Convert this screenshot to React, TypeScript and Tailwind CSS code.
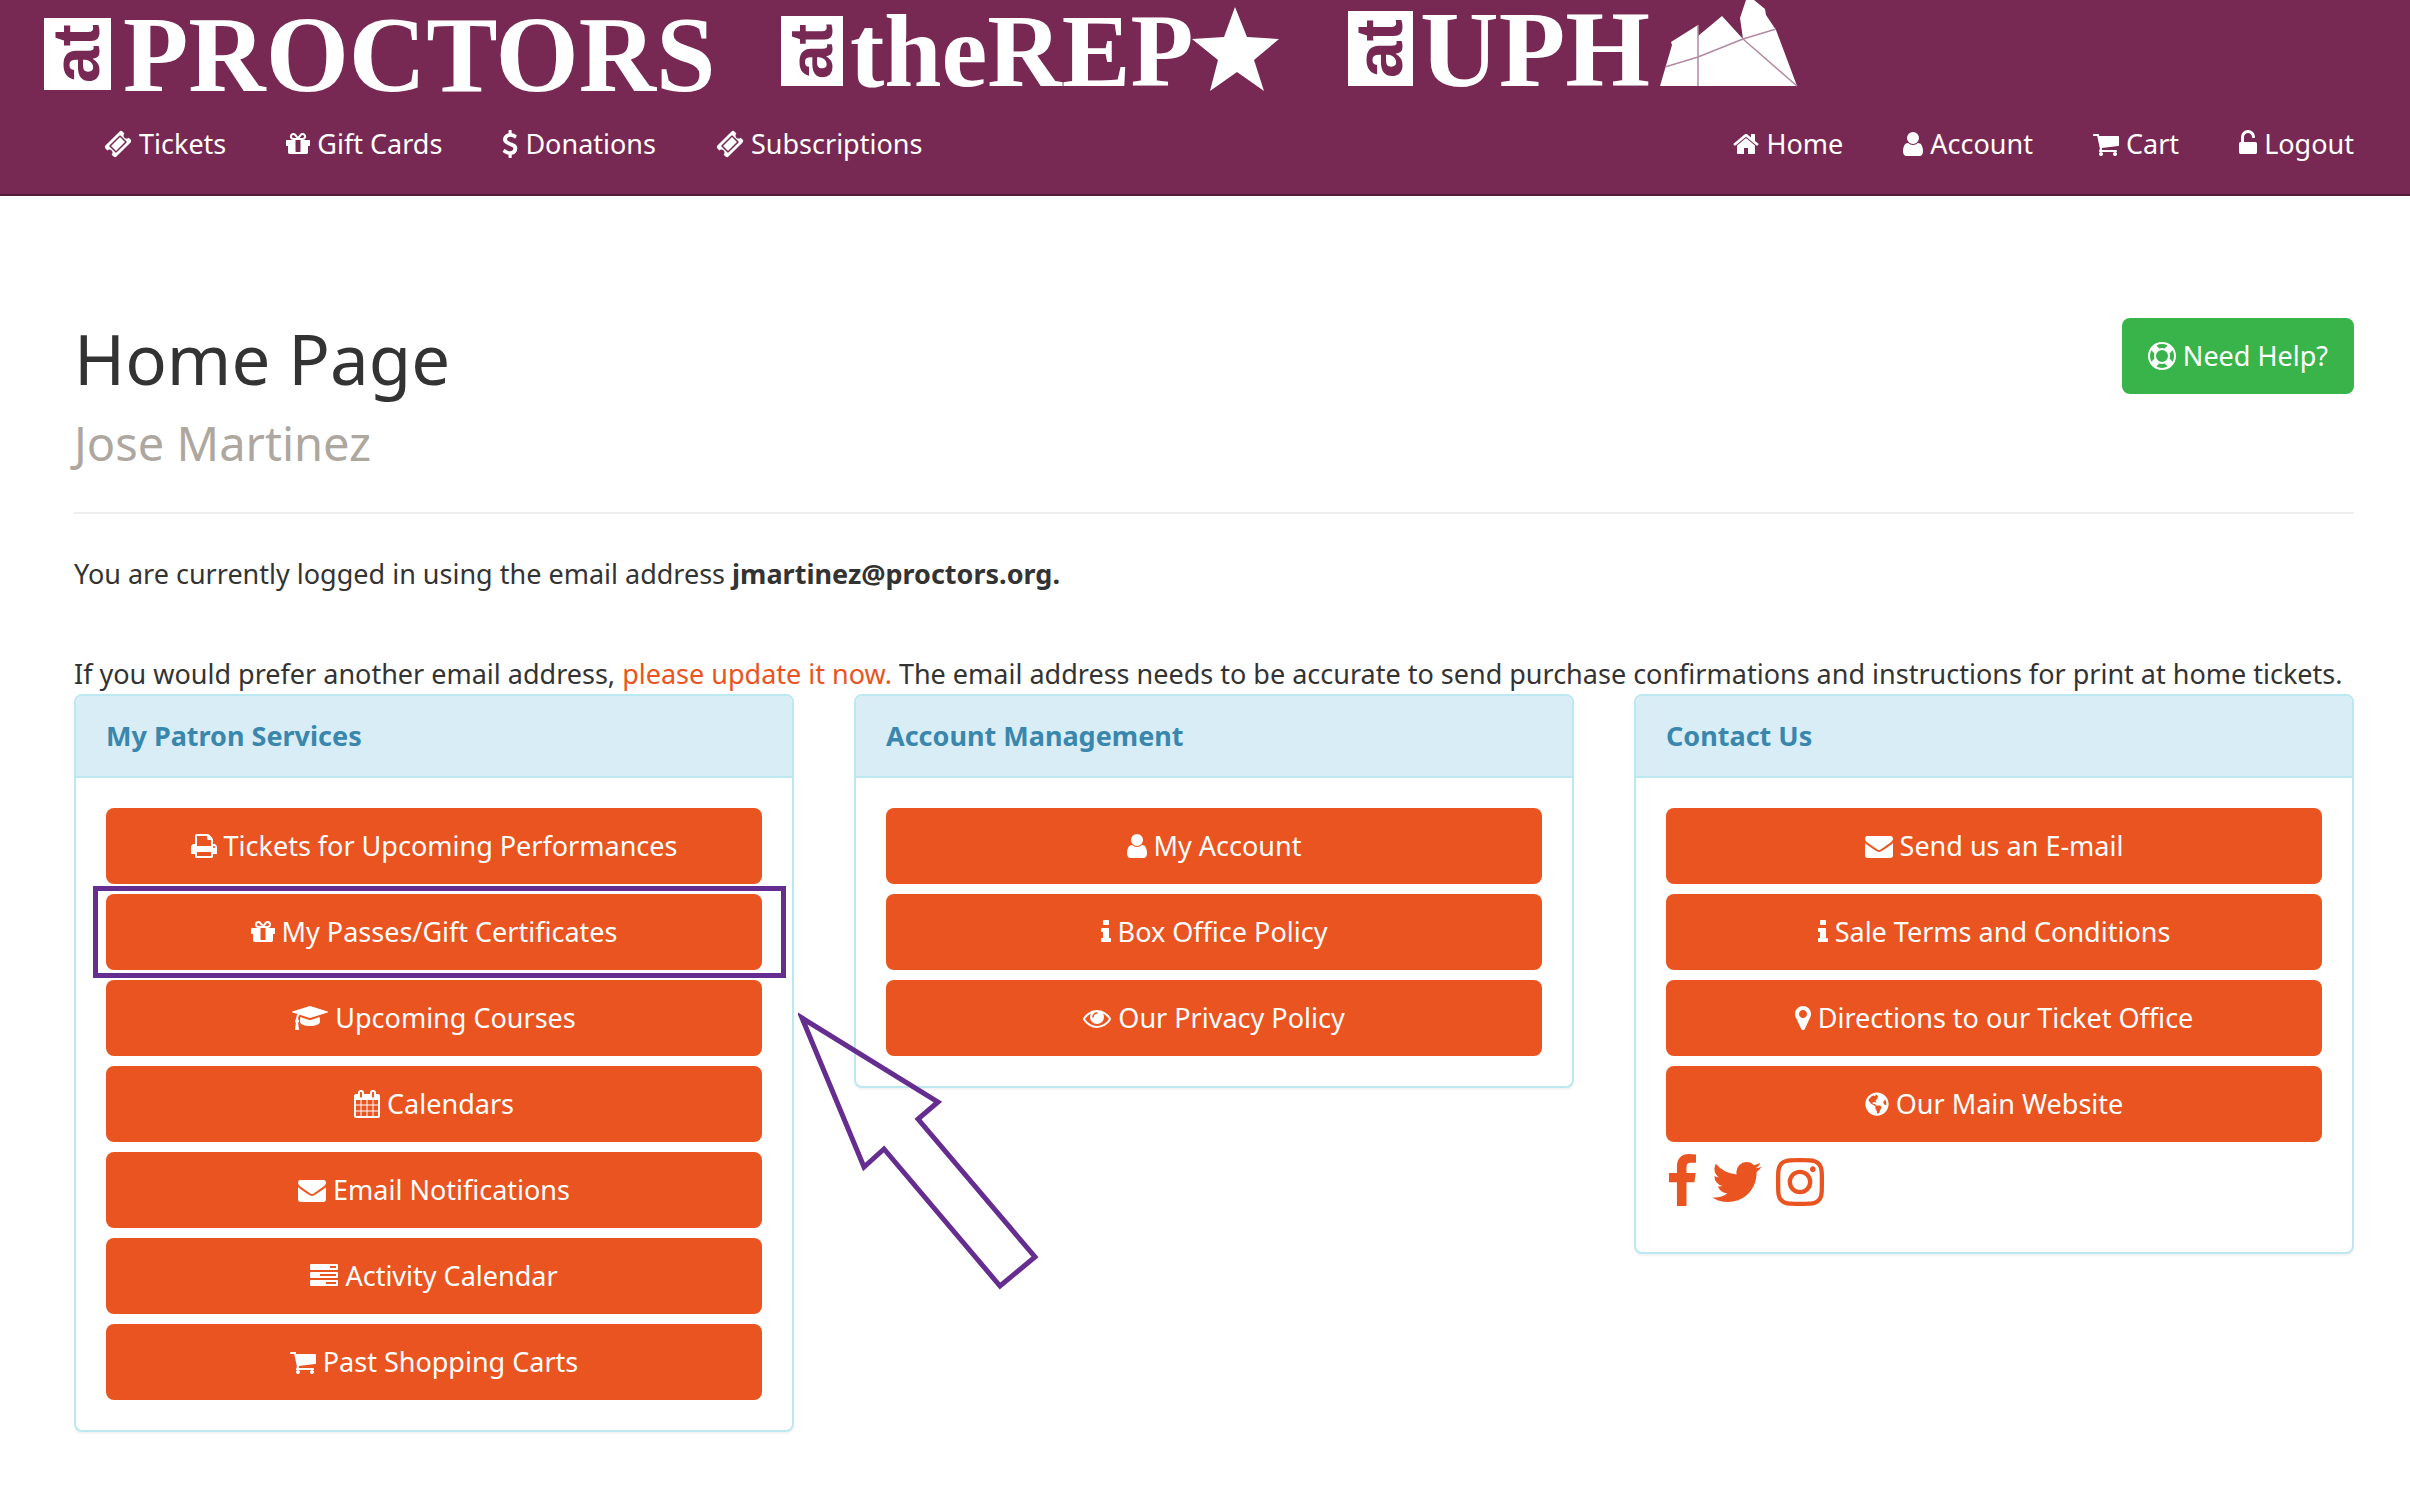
import type { ReactNode } from "react";
import { FaGlobeAmericas } from "react-icons/fa";

// Icon outlines share a 1792 unit square; width is the advance of the glyph
const icons = {
    home: { width: 1664, d: "M1472 992v480q0 26-19 45t-45 19h-384v-384h-256v384h-384q-26 0-45-19t-19-45v-480q0-1 .5-3t.5-3l575-474 575 474q1 2 1 6zm223-69l-62 74q-8 9-21 11h-3q-13 0-21-7l-692-577-692 577q-12 8-24 7-13-2-21-11l-62-74q-8-10-7-23.5t11-21.5l719-599q32-26 76-26t76 26l244 204v-195q0-14 9-23t23-9h192q14 0 23 9t9 23v408l219 182q10 8 11 21.5t-7 23.5z" },
    user: { width: 1280, d: "M1536 1399q0 109-62.5 187t-150.5 78h-854q-88 0-150.5-78t-62.5-187q0-85 8.5-160.5t31.5-152 58.5-131 94-89 134.5-34.5q131 128 313 128t313-128q76 0 134.5 34.5t94 89 58.5 131 31.5 152 8.5 160.5zm-256-887q0 159-112.5 271.5t-271.5 112.5-271.5-112.5-112.5-271.5 112.5-271.5 271.5-112.5 271.5 112.5 112.5 271.5z" },
    cart: { width: 1664, d: "M704 1536q0 52-38 90t-90 38-90-38-38-90 38-90 90-38 90 38 38 90zm896 0q0 52-38 90t-90 38-90-38-38-90 38-90 90-38 90 38 38 90zm128-1088v512q0 24-16.5 42.5t-40.5 21.5l-1044 122q13 60 13 70 0 16-24 64h920q26 0 45 19t19 45-19 45-45 19h-1024q-26 0-45-19t-19-45q0-11 8-31.5t16-36 21.5-40 15.5-29.5l-177-823h-204q-26 0-45-19t-19-45 19-45 45-19h256q16 0 28.5 6.5t19.5 15.5 13 24.5 8 26 5.5 29.5 4.5 26h1201q26 0 45 19t19 45z" },
    unlock: { width: 1152, d: "M1376 768q40 0 68 28t28 68v576q0 40-28 68t-68 28h-960q-40 0-68-28t-28-68v-576q0-40 28-68t68-28h32v-320q0-185 131.5-316.5t316.5-131.5 316.5 131.5 131.5 316.5q0 26-19 45t-45 19h-64q-26 0-45-19t-19-45q0-106-75-181t-181-75-181 75-75 181v320h736z" },
    gift: { width: 1536, d: "M1056 1356v-716h-320v716q0 25 18 38.5t46 13.5h192q28 0 46-13.5t18-38.5zm-456-844h195l-126-161q-26-31-69-31-40 0-68 28t-28 68 28 68 68 28zm688-96q0-40-28-68t-68-28q-43 0-69 31l-125 161h194q40 0 68-28t28-68zm376 256v320q0 14-9 23t-23 9h-96v416q0 40-28 68t-68 28h-1088q-40 0-68-28t-28-68v-416h-96q-14 0-23-9t-9-23v-320q0-14 9-23t23-9h440q-93 0-158.5-65.5t-65.5-158.5 65.5-158.5 158.5-65.5q107 0 168 77l128 165 128-165q61-77 168-77 93 0 158.5 65.5t65.5 158.5-65.5 158.5-158.5 65.5h440q14 0 23 9t9 23z" },
    ticket: { width: 1792, d: "M1024 452l316 316-572 572-316-316zm-211 979l618-618q19-19 19-45t-19-45l-362-362q-18-18-45-18t-45 18l-618 618q-19 19-19 45t19 45l362 362q18 18 45 18t45-18zm889-637l-907 908q-37 37-90.5 37t-90.5-37l-126-126q56-56 56-136t-56-136-136-56-136 56l-125-126q-37-37-37-90.5t37-90.5l907-906q37-37 90.5-37t90.5 37l125 125q-56 56-56 136t56 136 136 56 136-56l126 125q37 37 37 90.5t-37 90.5z" },
    dollar: { width: 1024, d: "M1362 1185q0 153-99.5 263.5t-258.5 136.5v175q0 14-9 23t-23 9h-135q-13 0-22.5-9.5t-9.5-22.5v-175q-66-9-127.5-31t-101.5-44.5-74-48-46.5-37.5-17.5-18q-17-21-2-41l103-135q7-10 23-12 15-2 24 9l2 2q113 99 243 125 37 8 74 8 81 0 142.5-43t61.5-122q0-28-15-53t-33.5-42-58.5-37.5-66-32-80-32.5q-39-16-61.5-25t-61.5-26.5-62.5-31-56.5-35.5-53.5-42.5-43.5-49-35.5-58-21-66.5-8.5-78q0-138 98-242t255-134v-180q0-13 9.5-22.5t22.5-9.5h135q14 0 23 9t9 23v176q57 6 110.5 23t87 33.5 63.5 37.5 39 29 15 14q17 18 5 38l-81 146q-8 15-23 16-14 3-27-7-3-3-14.5-12t-39-26.5-58.5-32-74.5-26-85.5-11.5q-95 0-155 43t-60 111q0 26 8.5 48t29.5 41.5 39.5 33 56 31 60.5 27 70 27.5q53 20 81 31.5t76 35 75.5 42.5 62 50 53 63.5 31.5 76.5 13 94z" },
    print: { width: 1664, d: "M448 1536h896v-256h-896v256zm0-640h896v-384h-160q-40 0-68-28t-28-68v-160h-640v640zm1152 64q0-26-19-45t-45-19-45 19-19 45 19 45 45 19 45-19 19-45zm128 0v416q0 13-9.5 22.5t-22.5 9.5h-224v160q0 40-28 68t-68 28h-960q-40 0-68-28t-28-68v-160h-224q-13 0-22.5-9.5t-9.5-22.5v-416q0-79 56.5-135.5t135.5-56.5h64v-544q0-40 28-68t68-28h672q40 0 88 20t76 48l152 152q28 28 48 76t20 88v256h64q79 0 135.5 56.5t56.5 135.5z" },
    graduation: { width: 2304, d: "M1774 836l18 316q4 69-82 128t-235 93.5-323 34.5-323-34.5-235-93.5-82-128l18-316 574 181q22 7 48 7t48-7zm530-324q0 23-22 31l-1120 352q-4 1-10 1t-10-1l-652-206q-43 34-71 111.5t-34 178.5q63 36 63 109 0 69-58 107l58 433q2 14-8 25-9 11-24 11h-192q-15 0-24-11-10-11-8-25l58-433q-58-38-58-107 0-73 65-111 11-207 98-330l-333-104q-22-8-22-31t22-31l1120-352q4-1 10-1t10 1l1120 352q22 8 22 31z" },
    calendar: { width: 1664, d: "M192 1664h288v-288h-288v288zm352 0h320v-288h-320v288zm-352-352h288v-320h-288v320zm352 0h320v-320h-320v320zm-352-384h288v-288h-288v288zm736 736h320v-288h-320v288zm-384-736h320v-288h-320v288zm768 736h288v-288h-288v288zm-384-352h320v-320h-320v320zm-352-864v-288q0-13-9.5-22.5t-22.5-9.5h-64q-13 0-22.5 9.5t-9.5 22.5v288q0 13 9.5 22.5t22.5 9.5h64q13 0 22.5-9.5t9.5-22.5zm736 864h288v-320h-288v320zm-384-384h320v-288h-320v288zm384 0h288v-288h-288v288zm32-480v-288q0-13-9.5-22.5t-22.5-9.5h-64q-13 0-22.5 9.5t-9.5 22.5v288q0 13 9.5 22.5t22.5 9.5h64q13 0 22.5-9.5t9.5-22.5zm384-64v1280q0 52-38 90t-90 38h-1408q-52 0-90-38t-38-90v-1280q0-52 38-90t90-38h128v-96q0-66 47-113t113-47h64q66 0 113 47t47 113v96h384v-96q0-66 47-113t113-47h64q66 0 113 47t47 113v96h128q52 0 90 38t38 90z" },
    envelope: { width: 1792, d: "M1792 710v794q0 66-47 113t-113 47h-1472q-66 0-113-47t-47-113v-794q44 49 101 87 362 246 497 345 57 42 92.5 65.5t94.5 48 110 24.5h2q51 0 110-24.5t94.5-48 92.5-65.5q170-123 498-345 57-39 100-87zm0-294q0 79-49 151t-122 123q-376 261-468 325-10 7-42.5 31t-54 38.5-52 32.5-57.5 27-50 9h-2q-23 0-50-9t-57.5-27-52-32.5-54-38.5-42.5-31q-91-64-262-182.5t-205-142.5q-62-42-117-115.5t-55-136.5q0-78 41.5-130t118.5-52h1472q65 0 112.5 47t47.5 113z" },
    tasks: { width: 1792, d: "M1024 1408h640v-128h-640v128zm-384-512h1024v-128h-1024v128zm640-512h384v-128h-384v128zm512 832v256q0 26-19 45t-45 19h-1664q-26 0-45-19t-19-45v-256q0-26 19-45t45-19h1664q26 0 45 19t19 45zm0-512v256q0 26-19 45t-45 19h-1664q-26 0-45-19t-19-45v-256q0-26 19-45t45-19h1664q26 0 45 19t19 45zm0-512v256q0 26-19 45t-45 19h-1664q-26 0-45-19t-19-45v-256q0-26 19-45t45-19h1664q26 0 45 19t19 45z" },
    info: { width: 640, d: "M1216 1344v128q0 26-19 45t-45 19h-512q-26 0-45-19t-19-45v-128q0-26 19-45t45-19h64v-384h-64q-26 0-45-19t-19-45v-128q0-26 19-45t45-19h384q26 0 45 19t19 45v576h64q26 0 45 19t19 45zm-128-1152v192q0 26-19 45t-45 19h-256q-26 0-45-19t-19-45v-192q0-26 19-45t45-19h256q26 0 45 19t19 45z" },
    eye: { width: 1792, d: "M1664 960q-152-236-381-353 61 104 61 225 0 185-131.5 316.5t-316.5 131.5-316.5-131.5-131.5-316.5q0-121 61-225-229 117-381 353 133 205 333.5 326.5t434.5 121.5 434.5-121.5 333.5-326.5zm-720-384q0-20-14-34t-34-14q-125 0-214.5 89.5t-89.5 214.5q0 20 14 34t34 14 34-14 14-34q0-86 61-147t147-61q20 0 34-14t14-34zm848 384q0 34-20 69-140 230-376.5 368.5t-499.5 138.5-499.5-139-376.5-368q-20-35-20-69t20-69q140-229 376.5-368t499.5-139 499.5 139 376.5 368q20 35 20 69z" },
    marker: { width: 1024, d: "M1152 640q0-106-75-181t-181-75-181 75-75 181 75 181 181 75 181-75 75-181zm256 0q0 109-33 179l-364 774q-16 33-47.5 52t-67.5 19-67.5-19-46.5-52l-365-774q-33-70-33-179 0-212 150-362t362-150 362 150 150 362z" },
    lifeRing: { width: 1792, d: "M896 0q182 0 348 71t286 191 191 286 71 348-71 348-191 286-286 191-348 71-348-71-286-191-191-286-71-348 71-348 191-286 286-191 348-71zm0 128q-190 0-361 90l194 194q82-28 167-28t167 28l194-194q-171-90-361-90zm-678 1129l194-194q-28-82-28-167t28-167l-194-194q-90 171-90 361t90 361zm678 407q190 0 361-90l-194-194q-82 28-167 28t-167-28l-194 194q171 90 361 90zm0-384q159 0 271.5-112.5t112.5-271.5-112.5-271.5-271.5-112.5-271.5 112.5-112.5 271.5 112.5 271.5 271.5 112.5zm484-217l194 194q90-171 90-361t-90-361l-194 194q28 82 28 167t-28 167z" },
    facebook: { width: 1024, d: "M1343 12v264h-157q-86 0-116 36t-30 108v189h293l-39 296h-254v759h-306v-759h-255v-296h255v-218q0-186 104-288.5t277-102.5q147 0 228 12z" },
    twitter: { width: 1664, d: "M1684 408q-67 98-162 167 1 14 1 42 0 130-38 259.5t-115.5 248.5-184.5 210.5-258 146-323 54.5q-271 0-496-145 35 4 78 4 225 0 401-138-105-2-188-64.5t-114-159.5q33 5 61 5 43 0 85-11-112-23-185.5-111.5t-73.5-205.5v-4q68 38 146 41-66-44-105-115t-39-154q0-88 44-163 121 149 294.5 238.5t371.5 99.5q-8-38-8-74 0-134 94.5-228.5t228.5-94.5q140 0 236 102 109-21 205-78-37 115-142 178 93-10 186-50z" },
    instagram: { width: 1536, d: "M1152 896q0-106-75-181t-181-75-181 75-75 181 75 181 181 75 181-75 75-181zm138 0q0 164-115 279t-279 115-279-115-115-279 115-279 279-115 279 115 115 279zm108-410q0 38-27 65t-65 27-65-27-27-65 27-65 65-27 65 27 27 65zm-502-220q-7 0-76.5-.5t-105.5 0-96.5 3-103 10-71.5 18.5q-50 20-88 58t-58 88q-11 29-18.5 71.5t-10 103-3 96.5 0 105.5.5 76.5-.5 76.5 0 105.5 3 96.5 10 103 18.5 71.5q20 50 58 88t88 58q29 11 71.5 18.5t103 10 96.5 3 105.5 0 76.5-.5 76.5.5 105.5 0 96.5-3 103-10 71.5-18.5q50-20 88-58t58-88q11-29 18.5-71.5t10-103 3-96.5 0-105.5-.5-76.5.5-76.5 0-105.5-3-96.5-10-103-18.5-71.5q-20-50-58-88t-88-58q-29-11-71.5-18.5t-103-10-96.5-3-105.5 0-76.5.5zm768 630q0 229-5 317-10 208-124 322t-322 124q-88 5-317 5t-317-5q-208-10-322-124t-124-322q-5-88-5-317t5-317q10-208 124-322t322-124q88-5 317-5t317 5q208 10 322 124t124 322q5 88 5 317z" },
};

type IconName = keyof typeof icons | "globe";

interface IconProps {
    name: IconName;
    className?: string;
}

function Icon({ name, className = "inline-block h-7 w-auto align-[-4px]" }: IconProps) {
    if (name === "globe") {
        return <FaGlobeAmericas aria-hidden="true" className="inline-block size-6 align-[-2px]" />;
    }

    const { width, d } = icons[name];
    // The graduation cap is wider than the square and starts at zero
    const left = width > 1792 ? 0 : (1792 - width) / 2;

    return (
        <svg viewBox={`${left} 0 ${width} 1792`} fill="currentColor" aria-hidden="true" className={className}>
            <path d={d} />
        </svg>
    );
}

interface LinkItem {
    icon: IconName;
    label: string;
    highlighted?: boolean;
}

const mainLinks: LinkItem[] = [
    { icon: "ticket", label: "Tickets" },
    { icon: "gift", label: "Gift Cards" },
    { icon: "dollar", label: "Donations" },
    { icon: "ticket", label: "Subscriptions" },
];

const userLinks: LinkItem[] = [
    { icon: "home", label: "Home" },
    { icon: "user", label: "Account" },
    { icon: "cart", label: "Cart" },
    { icon: "unlock", label: "Logout" },
];

const patronLinks: LinkItem[] = [
    { icon: "print", label: "Tickets for Upcoming Performances" },
    { icon: "gift", label: "My Passes/Gift Certificates", highlighted: true },
    { icon: "graduation", label: "Upcoming Courses" },
    { icon: "calendar", label: "Calendars" },
    { icon: "envelope", label: "Email Notifications" },
    { icon: "tasks", label: "Activity Calendar" },
    { icon: "cart", label: "Past Shopping Carts" },
];

const accountLinks: LinkItem[] = [
    { icon: "user", label: "My Account" },
    { icon: "info", label: "Box Office Policy" },
    { icon: "eye", label: "Our Privacy Policy" },
];

const contactLinks: LinkItem[] = [
    { icon: "envelope", label: "Send us an E-mail" },
    { icon: "info", label: "Sale Terms and Conditions" },
    { icon: "marker", label: "Directions to our Ticket Office" },
    { icon: "globe", label: "Our Main Website" },
];

const socialLinks: LinkItem[] = [
    { icon: "facebook", label: "Facebook" },
    { icon: "twitter", label: "Twitter" },
    { icon: "instagram", label: "Instagram" },
];

function Logos() {
    return (
        <div className="flex gap-16 pl-11 font-['Liberation_Serif',serif] font-bold">
            <a href="#proctors">
                <svg width="673" height="94" viewBox="0 0 673 94" fill="#fff" className="block overflow-visible">
                    <rect y="18" width="67" height="72" />
                    <text transform="translate(55 83) rotate(-90)" fontSize="66" fill="#772953" className="font-['Liberation_Sans',sans-serif]">at</text>
                    <text x="79" y="91" fontSize="107">PROCTORS</text>
                </svg>
            </a>
            <a href="#the-rep">
                <svg width="503" height="94" viewBox="0 0 503 94" fill="#fff" className="block overflow-visible">
                    <rect y="16" width="62" height="70" />
                    <text transform="translate(51 79) rotate(-90)" fontSize="62" fill="#772953" className="font-['Liberation_Sans',sans-serif]">at</text>
                    <text x="69" y="86" fontSize="103">theREP</text>
                    <polygon points="454,7 466,37 498,39 473,60 483,91 456,72 429,91 437,60 411,39 443,37" />
                </svg>
            </a>
            <a href="#uph">
                <svg width="450" height="94" viewBox="0 0 450 94" fill="#fff" className="block overflow-visible">
                    <rect y="11" width="65" height="75" />
                    <text transform="translate(54 78) rotate(-90)" fontSize="66" fill="#772953" className="font-['Liberation_Sans',sans-serif]">at</text>
                    <text x="72" y="86" fontSize="109">UPH</text>
                    <polygon points="312,86 324,45 323,42 350,25 350,36 374,16 395,39 392,18 398,0 406,0 417,9 418,15 428,30 449,86" />
                    <path d="M317 67L350 57L395 39L428 29M350 25V86M395 39L449 86" fill="none" stroke="#b489a1" strokeWidth="1.5" />
                </svg>
            </a>
        </div>
    );
}

function NavLinks({ links }: { links: LinkItem[] }) {
    return (
        <ul className="flex gap-15">
            {links.map(({ icon, label }) => (
                <li key={label}>
                    <a href="#" className="whitespace-nowrap text-white">
                        <Icon name={icon} /> {label}
                    </a>
                </li>
            ))}
        </ul>
    );
}

// Purple frame and arrow laid over the link that the patron should use
function Callout() {
    return (
        <>
            <span className="pointer-events-none absolute -top-2 -right-6 -bottom-2 -left-[13px] border-5 border-[#662d91]" />
            <svg viewBox="0 0 245 285" fill="none" aria-hidden="true" className="pointer-events-none absolute top-29 left-full z-10 ml-9 h-[285px] w-[245px] max-w-none">
                <path d="M4 8L140 92L120 109L237 247L202 276L86 139L66 157Z" stroke="#662d91" strokeWidth="5" strokeMiterlimit="10" />
            </svg>
        </>
    );
}

interface PanelProps {
    title: string;
    links: LinkItem[];
    children?: ReactNode;
}

function Panel({ title, links, children }: PanelProps) {
    return (
        <section className="rounded-lg border-2 border-[#bce8f1] bg-white shadow-[0_2px_2px_rgba(0,0,0,0.05)]">
            <h3 className="rounded-t-md border-b-2 border-[#bce8f1] bg-[#d9edf7] px-[30px] py-5 font-bold text-[#3a87ad]">{title}</h3>
            <div className="flex flex-col gap-[10px] p-[30px]">
                <ul className="flex flex-col gap-[10px]">
                    {links.map(({ icon, label, highlighted }) => (
                        <li key={label} className="relative">
                            <a href="#" className="block rounded-lg bg-[#e95420] py-[18px] text-center text-white">
                                <Icon name={icon} /> {label}
                            </a>
                            {highlighted && <Callout />}
                        </li>
                    ))}
                </ul>
                {children}
            </div>
        </section>
    );
}

export default function App() {
    return (
        <div className="min-h-screen bg-white font-['Noto_Sans',sans-serif] text-[27px] leading-10 text-[#333333]">
            <header className="border-b-2 border-[#511c39] bg-[#772953]">
                <Logos />
                <nav className="flex justify-between py-[30px] pr-14 pl-[104px]">
                    <NavLinks links={mainLinks} />
                    <NavLinks links={userLinks} />
                </nav>
            </header>

            <main className="pt-[122px] pr-14 pb-17 pl-[74px]">
                <div className="flex items-start justify-between border-b-2 border-[#eeeeee] pb-11">
                    <div>
                        <h1 className="text-[69px] leading-20">Home Page</h1>
                        <h2 className="mt-5 text-[47px] leading-[50px] text-[#aea79f]">Jose Martinez</h2>
                    </div>
                    <button type="button" className="rounded-lg bg-[#38b44a] px-[26px] py-[18px] text-white">
                        <Icon name="lifeRing" /> Need Help?
                    </button>
                </div>

                <p className="mt-10">
                    You are currently logged in using the email address <strong>jmartinez@proctors.org.</strong>
                </p>
                <p className="mt-15">
                    If you would prefer another email address, <a href="#" className="text-[#e95420]">please update it now.</a> The email address needs to be accurate to send purchase confirmations and instructions for print at home tickets.
                </p>

                <div className="grid grid-cols-3 items-start gap-15">
                    <Panel title="My Patron Services" links={patronLinks} />
                    <Panel title="Account Management" links={accountLinks} />
                    <Panel title="Contact Us" links={contactLinks}>
                        <div className="flex gap-[13px] pt-[2px] pb-3 text-[#e95420]">
                            {socialLinks.map(({ icon, label }) => (
                                <a key={label} href="#" aria-label={label}>
                                    <Icon name={icon} className="block h-14 w-auto" />
                                </a>
                            ))}
                        </div>
                    </Panel>
                </div>
            </main>
        </div>
    );
}
